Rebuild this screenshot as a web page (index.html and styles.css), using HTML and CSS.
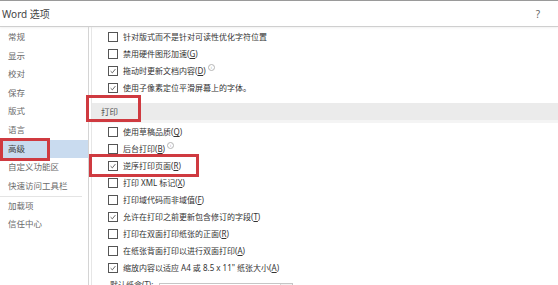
FILE: index.html
```html
<!DOCTYPE html>
<html lang="zh-CN">
<head>
<meta charset="UTF-8">
<title>Word 选项</title>
<link rel="stylesheet" href="styles.css">
</head>
<body>

<!-- 标题栏 -->
<div class="titlebar">
    <span class="title">Word 选项</span>
    <span class="help">?</span>
</div>

<div class="main">
    <!-- 左侧导航 -->
    <ul class="nav">
        <li>常规</li>
        <li>显示</li>
        <li>校对</li>
        <li>保存</li>
        <li>版式</li>
        <li>语言</li>
        <li class="active">高级<span class="mark mark-nav"></span></li>
        <li>自定义功能区</li>
        <li>快速访问工具栏</li>
        <li class="sep">加载项</li>
        <li>信任中心</li>
    </ul>

    <!-- 右侧选项 -->
    <div class="content">
        <div class="row"><span class="box"></span>针对版式而不是针对可读性优化字符位置</div>
        <div class="row"><span class="box"></span>禁用硬件图形加速(<u>G</u>)</div>
        <div class="row"><span class="box checked"><svg viewBox="0 0 10 10"><path d="M2 5.2 L4.2 7.3 L8 2.6"/></svg></span>拖动时更新文档内容(<u>D</u>)<span class="info">i</span></div>
        <div class="row"><span class="box checked"><svg viewBox="0 0 10 10"><path d="M2 5.2 L4.2 7.3 L8 2.6"/></svg></span>使用子像素定位平滑屏幕上的字体。</div>

        <div class="section"><span class="section-title">打印</span><span class="mark mark-section"></span></div>

        <div class="row"><span class="box"></span>使用草稿品质(<u>Q</u>)</div>
        <div class="row"><span class="box"></span>后台打印(<u>B</u>)<span class="info">i</span></div>
        <div class="row"><span class="box checked"><svg viewBox="0 0 10 10"><path d="M2 5.2 L4.2 7.3 L8 2.6"/></svg></span>逆序打印页面(<u>R</u>)<span class="mark mark-row"></span></div>
        <div class="row"><span class="box"></span>打印 XML 标记(<u>X</u>)</div>
        <div class="row"><span class="box"></span>打印域代码而非域值(<u>F</u>)</div>
        <div class="row"><span class="box checked"><svg viewBox="0 0 10 10"><path d="M2 5.2 L4.2 7.3 L8 2.6"/></svg></span>允许在打印之前更新包含修订的字段(<u>T</u>)</div>
        <div class="row"><span class="box"></span>打印在双面打印纸张的正面(<u>R</u>)</div>
        <div class="row"><span class="box"></span>在纸张背面打印以进行双面打印(<u>A</u>)</div>
        <div class="row"><span class="box checked"><svg viewBox="0 0 10 10"><path d="M2 5.2 L4.2 7.3 L8 2.6"/></svg></span>缩放内容以适应 A4 或 8.5 x 11" 纸张大小(<u>A</u>)</div>
        <div class="row tray">默认纸盒(<u>T</u>):<span class="select">使用打印机设置<span class="arrow"></span></span></div>
    </div>
</div>

</body>
</html>
```

FILE: styles.css
```css
body {
    margin: 0;
    padding: 0;
    width: 558px;
    height: 285px;
    overflow: hidden;
    background: #ffffff;
    font-family: "Noto Sans", "Noto Sans CJK SC", sans-serif;
    color: #333;
}

.titlebar {
    height: 25px;
    border-top: 1px solid #9a9a9a;
    border-bottom: 1px solid #cfcfcf;
    box-shadow: 0 1px 2px rgba(0,0,0,0.06);
    display: flex;
    align-items: center;
    justify-content: space-between;
    padding: 0 18px 0 2px;
}

.title {
    font-size: 10px;
    color: #444;
}

.help {
    font-size: 10px;
    color: #666;
}

.main {
    display: flex;
    height: 258px;
}

.nav {
    list-style: none;
    margin: 0;
    padding: 1px 0 0 0;
    width: 88px;
    border-right: 1px solid #d4d4d4;
}

.nav li {
    position: relative;
    height: 18.6px;
    line-height: 18.6px;
    padding-left: 8px;
    font-size: 8.5px;
    color: #6a6a6a;
}

.nav li.active {
    background: #c9dbef;
    color: #444;
}

.nav li.sep {
    border-top: 1px solid #e4e4e4;
    margin-top: 1px;
    margin-right: 6px;
    height: 17.6px;
}

.content {
    flex: 1;
    margin-left: 2px;
    border-left: 1px solid #e6e6e6;
    padding-top: 1px;
    font-size: 8px;
}

.row {
    position: relative;
    display: flex;
    align-items: center;
    height: 17px;
    padding-left: 16px;
    white-space: nowrap;
}

.row u {
    text-decoration-thickness: 1px;
    text-underline-offset: 1px;
}

.box {
    width: 8px;
    height: 8px;
    border: 1px solid #555;
    background: #fff;
    margin-right: 5px;
    flex: none;
}

.box svg {
    display: block;
    width: 8px;
    height: 8px;
}

.box svg path {
    fill: none;
    stroke: #444;
    stroke-width: 1;
}

.info {
    display: inline-block;
    width: 5px;
    height: 5px;
    border: 1px solid #b5b5b5;
    border-radius: 50%;
    font-size: 4px;
    line-height: 5px;
    text-align: center;
    color: #999;
    margin-left: 2px;
    align-self: flex-start;
    margin-top: 2px;
}

.section {
    position: relative;
    margin-top: 7px;
    height: 17px;
    line-height: 17px;
    background: #ebebeb;
    border-bottom: 3px solid #f4f4f4;
    padding-left: 9px;
    font-size: 8.5px;
    color: #555;
}

.tray {
    padding-left: 18px;
    color: #444;
}

.select {
    position: relative;
    margin-left: 6px;
    margin-top: 12px;
    width: 128px;
    height: 14px;
    line-height: 14px;
    border: 1px solid #c6c6c6;
    padding-left: 4px;
    color: #555;
}

.arrow {
    position: absolute;
    right: 0;
    top: 0;
    width: 11px;
    height: 14px;
    border-left: 1px solid #d6d6d6;
    background: #f2f2f2;
}

/* 红色标注框 */
.mark {
    position: absolute;
    border: 3px solid #cf3a40;
    pointer-events: none;
}

.mark-nav {
    left: 0;
    top: -2px;
    width: 44px;
    height: 17px;
}

.mark-section {
    left: -6px;
    top: -8px;
    width: 49px;
    height: 21px;
}

.mark-row {
    left: -3px;
    top: -3px;
    width: 104px;
    height: 17px;
}
```
